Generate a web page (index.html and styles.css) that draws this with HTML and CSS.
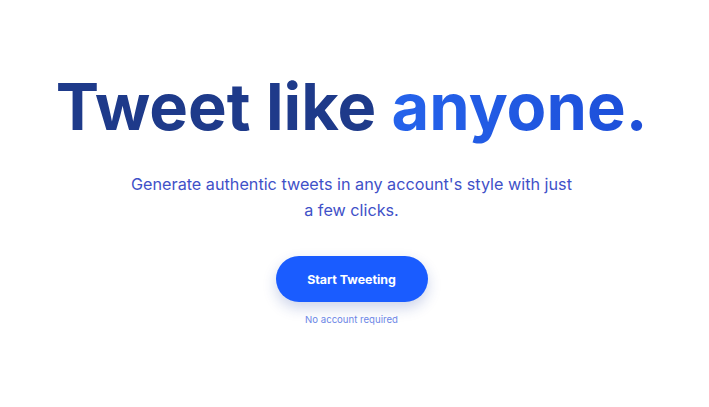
FILE: index.html
```html
<!DOCTYPE html>
<html>
<head>
<meta charset="utf-8">
<link rel="stylesheet" href="styles.css">
</head>
<body>
<main class="hero">
  <h1 class="title">Tweet like <span class="accent">anyone.</span></h1>
  <p class="subtitle">Generate authentic tweets in any account's style with just a few clicks.</p>
  <button class="cta">Start Tweeting</button>
  <p class="note">No account required</p>
</main>
</body>
</html>
```
FILE: styles.css
```css
html, body {
  margin: 0;
  padding: 0;
  background: #ffffff;
}
body {
  font-family: Inter, "Noto Sans", sans-serif;
}
.hero {
  display: flex;
  flex-direction: column;
  align-items: center;
  padding-top: 68px;
  padding-right: 6px;
}
.title {
  margin: 0;
  font-size: 65px;
  font-weight: 700;
  letter-spacing: 0;
  line-height: 78px;
  color: #1e3a8a;
}
.accent {
  background: linear-gradient(90deg, #2563eb, #1d4ed8);
  -webkit-background-clip: text;
  background-clip: text;
  color: transparent;
}
.subtitle {
  margin: 25px 0 0;
  width: 452px;
  text-align: center;
  font-size: 16.2px;
  line-height: 26px;
  color: #3f51c8;
}
.cta {
  margin-top: 33px;
  width: 152px;
  height: 46px;
  border: none;
  border-radius: 23px;
  background: #1a5cff;
  color: #ffffff;
  font-family: Inter, sans-serif;
  font-size: 12.4px;
  font-weight: 700;
  box-shadow: 0 6px 14px rgba(26, 60, 160, 0.22);
}
.note {
  margin: 12px 0 0;
  font-size: 9.6px;
  color: #6b86e6;
}
```
